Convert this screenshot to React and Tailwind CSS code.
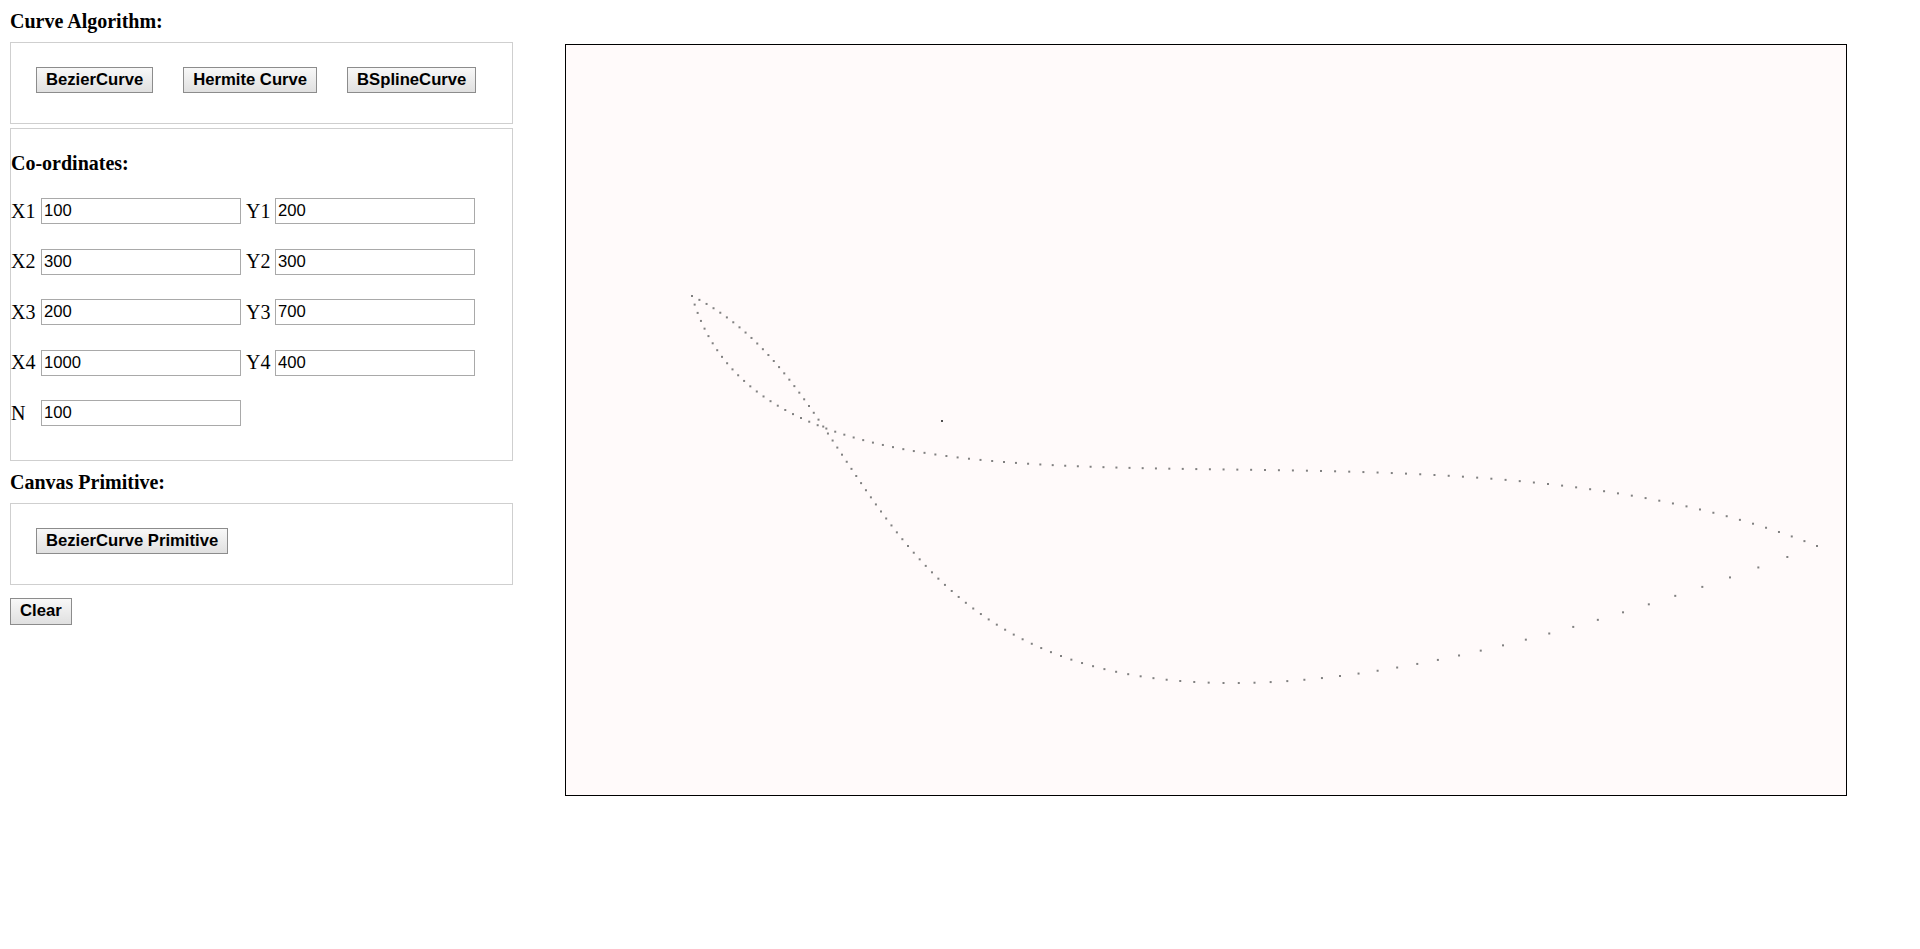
import React, { useMemo } from "react";

const btnCls =
  "h-[26px] px-[9px] border border-[#8c8c8c] bg-linear-to-b from-[#f8f8f8] to-[#e0e0e0] text-[16.67px] font-bold font-['Liberation_Sans',Arial,sans-serif] leading-none text-black whitespace-nowrap flex items-center justify-center";

const inputCls =
  "w-[200px] h-[26px] border border-[#a9a9a9] pl-[2px] bg-white text-[16.67px] font-['Liberation_Sans',Arial,sans-serif] text-black outline-none";

const labelCls =
  "text-[20px] leading-[23px] font-['Liberation_Serif','Times_New_Roman',serif] text-black";

function Row({ a, av, b, bv }) {
  return (
    <div className="flex items-center h-[26px]">
      <span className={`${labelCls} w-[30px]`}>{a}</span>
      <input className={inputCls} defaultValue={av} />
      {b && (
        <>
          <span className={`${labelCls} ml-[5px] w-[29px]`}>{b}</span>
          <input className={inputCls} defaultValue={bv} />
        </>
      )}
    </div>
  );
}

export default function App() {
  const { bez, her } = useMemo(() => {
    const P = [
      [100, 200],
      [300, 300],
      [200, 700],
      [1000, 400],
    ];
    const N = 100;
    const bez = [];
    const her = [];
    for (let i = 0; i <= N; i++) {
      const t = i / N;
      const u = 1 - t;
      const b0 = u * u * u,
        b1 = 3 * t * u * u,
        b2 = 3 * t * t * u,
        b3 = t * t * t;
      bez.push([
        b0 * P[0][0] + b1 * P[1][0] + b2 * P[2][0] + b3 * P[3][0],
        b0 * P[0][1] + b1 * P[1][1] + b2 * P[2][1] + b3 * P[3][1],
      ]);
      const h1 = 2 * t * t * t - 3 * t * t + 1;
      const h2 = -2 * t * t * t + 3 * t * t;
      const h3 = t * t * t - 2 * t * t + t;
      const h4 = t * t * t - t * t;
      her.push([
        h1 * P[0][0] + h2 * P[3][0] + h3 * P[2][0] + h4 * P[3][0],
        h1 * P[0][1] + h2 * P[3][1] + h3 * P[2][1] + h4 * P[3][1],
      ]);
    }
    return { bez, her };
  }, []);

  return (
    <div className="flex items-start pt-[10px] pl-[10px] bg-white min-h-[949px]">
      {/* Left controls */}
      <div className="w-[503px] flex flex-col">
        <div className={`${labelCls} font-bold h-[23px]`}>Curve Algorithm:</div>
        <div className="mt-[9px] h-[82px] border border-[#cfcfcf] pt-[24px] pl-[25px] flex items-start gap-[30px]">
          <button className={btnCls}>BezierCurve</button>
          <button className={btnCls}>Hermite Curve</button>
          <button className={btnCls}>BSplineCurve</button>
        </div>

        <div className="mt-[4px] h-[333px] border border-[#cfcfcf] pt-[23px] flex flex-col">
          <div className={`${labelCls} font-bold h-[23px]`}>Co-ordinates:</div>
          <div className="mt-[23px] flex flex-col gap-[24.5px]">
            <Row a="X1" av="100" b="Y1" bv="200" />
            <Row a="X2" av="300" b="Y2" bv="300" />
            <Row a="X3" av="200" b="Y3" bv="700" />
            <Row a="X4" av="1000" b="Y4" bv="400" />
            <Row a="N" av="100" />
          </div>
        </div>

        <div className={`${labelCls} font-bold h-[23px] mt-[10px]`}>Canvas Primitive:</div>
        <div className="mt-[9px] h-[82px] border border-[#cfcfcf] pt-[24px] pl-[25px] flex items-start">
          <button className={btnCls}>BezierCurve Primitive</button>
        </div>

        <div className="mt-[13px] flex">
          <button className={`${btnCls} h-[27px]`}>Clear</button>
        </div>
      </div>

      {/* Canvas */}
      <div className="ml-[52px] mt-[34px] w-[1282px] h-[752px] border border-black bg-[#fffafa]">
        <svg width="1280" height="750" viewBox="0 0 1024 600" className="block">
          {bez.map(([x, y], i) => (
            <rect key={"b" + i} x={x} y={y} width="1.6" height="1.6" fill="#808080" />
          ))}
          {her.map(([x, y], i) => (
            <rect key={"h" + i} x={x} y={y} width="1.6" height="1.6" fill="#808080" />
          ))}
          <rect x="300" y="300" width="1.6" height="1.6" fill="#505050" />
        </svg>
      </div>
    </div>
  );
}
